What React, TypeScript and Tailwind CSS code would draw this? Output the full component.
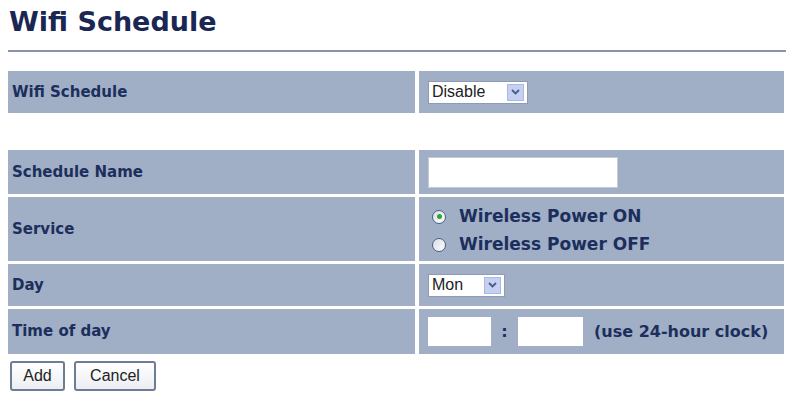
const label = 'flex items-center pl-[4px] text-[15px] font-bold text-[#1c2f5c] font-["DejaVu_Sans",Verdana,sans-serif]'
const cell = 'flex items-center bg-[#a0aec6]'

function Select({ value, width }: { value: string; width: string }) {
  return (
    <div className={`flex items-center h-[23px] bg-white border border-[#8d9bb4] ${width}`}>
      <span className="flex-1 pl-[3px] text-[16px] text-[#222] leading-none">{value}</span>
      <span className="flex items-center justify-center w-[17px] h-[17px] mr-[3px] bg-[#c6d0f0] border border-[#aab8e8]">
        <svg width="9" height="6" viewBox="0 0 9 6">
          <path d="M1 1l3.5 3.5L8 1" fill="none" stroke="#4a5a8a" strokeWidth="1.8" />
        </svg>
      </span>
    </div>
  )
}

function Radio({ checked }: { checked?: boolean }) {
  return (
    <span className="flex items-center justify-center w-[14px] h-[14px] rounded-full border border-[#4e5f80] bg-gradient-to-br from-[#d8dde6] to-white">
      {checked && <span className="w-[5px] h-[5px] rounded-full bg-[#2fa52f]" />}
    </span>
  )
}

export default function App() {
  return (
    <div className="w-[786px] h-[404px] bg-white font-['Liberation_Sans',Arial,sans-serif]">
      <div className="pl-[9px] pt-[4px]">
        <h1 className="text-[27px] font-bold text-[#1a2753] leading-[36px] font-['DejaVu_Sans',Verdana,sans-serif]">
          Wifi Schedule
        </h1>
      </div>
      <div className="ml-[8px] mt-[10px] h-[2px] bg-[#8892ac]" />

      <div className="ml-[8px] mr-[2px] mt-[19px] grid grid-cols-[407px_1fr] gap-x-[4px] h-[42px]">
        <div className={`${label} bg-[#a0aec6]`}>Wifi Schedule</div>
        <div className={`${cell} pl-[9px]`}>
          <Select value="Disable" width="w-[100px]" />
        </div>
      </div>

      <div className="ml-[8px] mr-[2px] mt-[37px] grid grid-cols-[407px_1fr] gap-x-[4px] gap-y-[3px] grid-rows-[44px_64px_42px_45px]">
        <div className={`${label} bg-[#a0aec6]`}>Schedule Name</div>
        <div className={`${cell} pl-[9px]`}>
          <div className="w-[190px] h-[31px] bg-white border border-[#c5cbd6]" />
        </div>

        <div className={`${label} bg-[#a0aec6]`}>Service</div>
        <div className={`${cell} pl-[13px] pt-[3px] flex-col !items-start justify-center gap-[9px] text-[17px] font-bold text-[#1c2f5c] font-['DejaVu_Sans',Verdana,sans-serif]`}>
          <div className="flex items-center gap-[13px] leading-[19px]">
            <Radio checked />
            <span>Wireless Power ON</span>
          </div>
          <div className="flex items-center gap-[13px] leading-[19px]">
            <Radio />
            <span>Wireless Power OFF</span>
          </div>
        </div>

        <div className={`${label} bg-[#a0aec6]`}>Day</div>
        <div className={`${cell} pl-[9px]`}>
          <Select value="Mon" width="w-[77px]" />
        </div>

        <div className={`${label} bg-[#a0aec6]`}>Time of day</div>
        <div className={`${cell} pl-[9px] text-[16px] font-bold text-[#1c2f5c] font-['DejaVu_Sans',Verdana,sans-serif]`}>
          <div className="w-[63px] h-[29px] bg-white" />
          <span className="w-[27px] text-center">:</span>
          <div className="w-[65px] h-[29px] bg-white" />
          <span className="ml-[11px]">(use 24-hour clock)</span>
        </div>
      </div>

      <div className="ml-[10px] mt-[7px] flex gap-[9px]">
        <button className="h-[30px] w-[55px] rounded-[3px] border-2 border-[#6e7c96] bg-gradient-to-b from-white to-[#eceef2] text-[16px] text-[#222]">
          Add
        </button>
        <button className="h-[30px] w-[82px] rounded-[3px] border-2 border-[#6e7c96] bg-gradient-to-b from-white to-[#eceef2] text-[16px] text-[#222]">
          Cancel
        </button>
      </div>
    </div>
  )
}
